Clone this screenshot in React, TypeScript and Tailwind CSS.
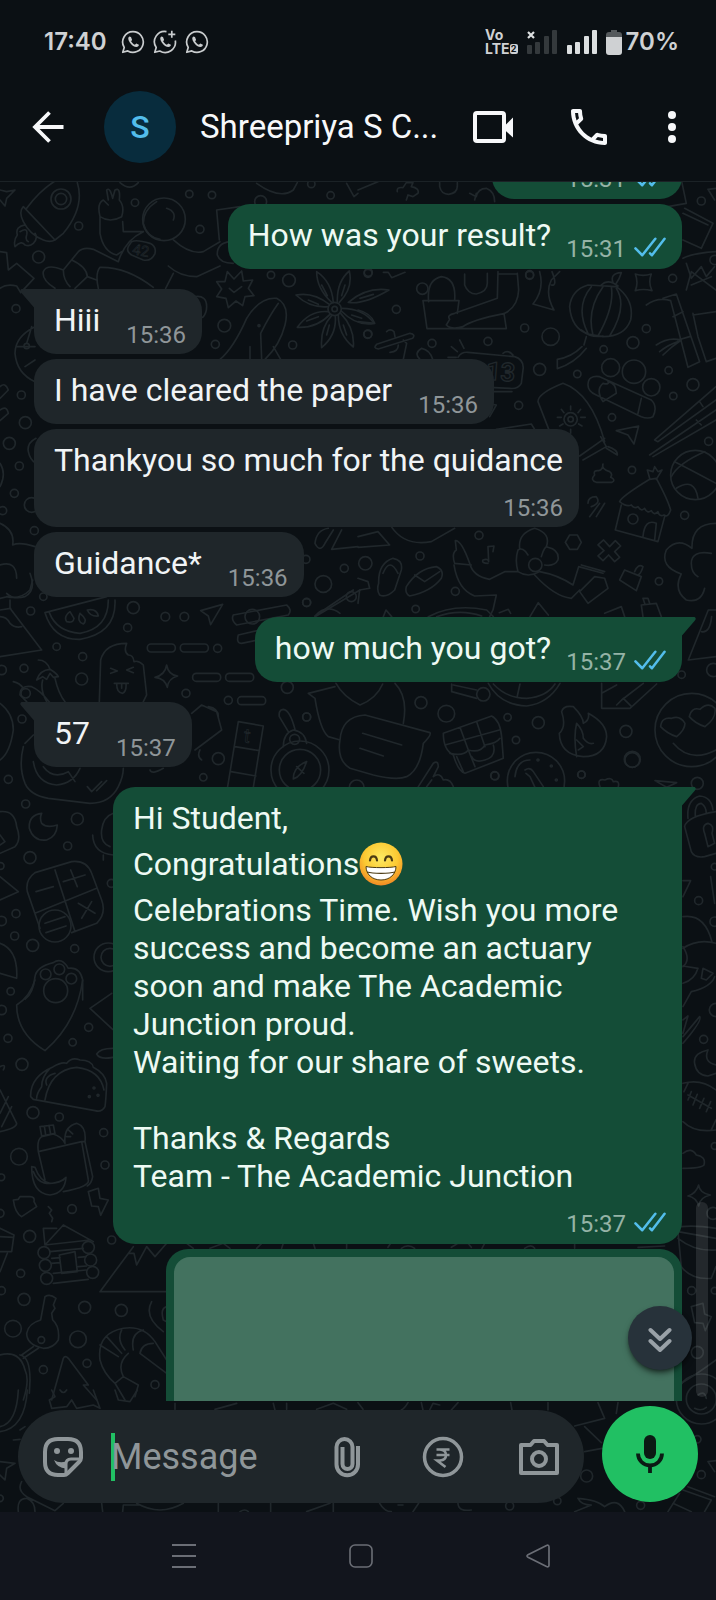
import type { ReactNode } from 'react';
import clsx from 'clsx';

type Message = {
  id: number;
  from: 'me' | 'them';
  lines: string[];
  time: string;
  tail?: boolean;
  stacked?: boolean;
};

const messages: Message[] = [
  { id: 1, from: 'me', lines: ['How was your result?'], time: '15:31' },
  { id: 2, from: 'them', lines: ['Hiii'], time: '15:36', tail: true },
  { id: 3, from: 'them', lines: ['I have cleared the paper'], time: '15:36' },
  { id: 4, from: 'them', lines: ['Thankyou so much for the quidance'], time: '15:36', stacked: true },
  { id: 5, from: 'them', lines: ['Guidance*'], time: '15:36' },
  { id: 6, from: 'me', lines: ['how much you got?'], time: '15:37', tail: true },
  { id: 7, from: 'them', lines: ['57'], time: '15:37', tail: true },
  {
    id: 8,
    from: 'me',
    lines: [
      'Hi Student,',
      'Congratulations😁',
      'Celebrations Time. Wish you more',
      'success and become an actuary',
      'soon and make The Academic',
      'Junction proud.',
      'Waiting for our share of sweets.',
      '',
      'Thanks & Regards',
      'Team - The Academic Junction',
    ],
    time: '15:37',
    tail: true,
    stacked: true,
  },
];

type Doodle = { x: number; y: number; d: string; dots: number[][]; bars?: number[][]; extra?: ReactNode };

// Wallpaper drawings, three units to a pixel
const doodles: Doodle[] = [
  {
    x: 358,
    y: 0,
    d: 'M0 570L60 545M118 575Q115 560 135 563L145 548H165L160 560Q185 565 180 580L165 590L150 585L145 600M245 548V560Q250 583 272 583Q297 580 298 560V548M335 580L355 590Q360 565 385 565Q410 575 410 605M350 600L355 580M1050 568L1074 565M1050 568L1070 600M972 548L985 610L900 625M980 625L1065 670L1030 745L975 720M975 640L1050 675M975 775Q1000 760 1074 755M985 790L1000 835L1030 800L1045 830L1070 800',
    dots: [[1030, 603, 12], [1070, 780, 14], [515, 826, 12], [30, 820, 12]],
  },
  {
    x: 0,
    y: 180,
    d: 'M80 85Q120 30 170 0M232 8Q255 80 190 160L165 180L70 80Q55 95 70 125Q90 165 130 180Q150 188 165 180M75 135Q45 140 52 165Q40 180 45 200Q65 180 75 195Q90 200 100 190Q115 175 105 160M60 155Q85 140 80 165Q75 180 85 185M0 30L20 35L45 30L20 55L15 78L0 60M300 110Q290 70 310 60L325 75M325 60L320 30Q330 20 338 55L345 30Q362 20 358 60Q375 80 365 110Q330 130 300 110L300 160Q310 215 350 225L365 215M368 125L370 155H430M500 85Q530 95 520 120M470 65Q430 90 430 130Q440 170 480 178M395 185Q410 178 450 190Q470 200 465 220Q455 245 430 240L395 225Q378 215 385 200ZM430 155Q375 180 355 245L280 208Q250 200 235 215L190 270Q140 250 130 275Q125 300 165 325M190 270Q190 300 210 320M215 240Q260 260 262 290L225 325M295 325Q285 280 300 262Q380 260 460 322M262 290L290 300M520 180Q570 225 610 215L660 185M505 258Q540 290 590 290L660 258M520 280L497 325M650 90L720 80M650 90L658 180M690 185Q650 190 652 225Q660 250 700 250M0 215L20 218L25 270L50 250L102 295L62 338L50 318Q20 310 0 325M770 10Q840 60 880 30L892 8M360 8Q390 35 415 8M1040 10L1062 50L1074 40M105 440Q45 470 45 520Q50 580 105 605M50 500H105M75 560L105 540M80 490L95 440M0 620Q15 605 25 630L0 655M0 690Q20 675 25 700L0 722M108 775Q80 790 85 815Q90 840 108 850M0 850Q20 880 0 920M0 1030Q45 1050 38 1095Q60 1085 105 1100M0 1155Q50 1140 50 1195M90 1180Q110 1230 75 1250Q40 1260 20 1240M985 1045Q950 1050 945 1090Q960 1120 975 1090L1000 1050M1025 1050L995 1108L1074 1100M585 350Q620 345 620 380Q620 400 608 412',
    dots: [[183, 57, 30], [183, 57, 17], [492, 118, 64], [568, 42, 11], [636, 45, 11], [405, 68, 11], [600, 148, 12], [236, 138, 12], [116, 231, 18], [48, 386, 12], [934, 12, 11], [992, 46, 11], [782, 65, 18], [64, 645, 12], [76, 728, 18], [28, 790, 18], [58, 858, 12], [43, 940, 12], [95, 975, 22], [8, 992, 12], [103, 1052, 12], [918, 1138, 12], [1033, 1165, 12], [970, 1212, 25], [80, 498, 8]],
    extra: <text x="398" y="226" fontSize="44" strokeWidth="2" transform="rotate(10 420 210)">42</text>,
  },
  {
    x: 190,
    y: 265,
    d: 'M80 50L105 50L112 20L132 42L155 18L160 48L188 45L175 70L192 92L165 95L158 122L138 108L115 128L108 100L80 95L95 72ZM118 70L132 82L155 65M425 112Q380 70 380 20Q425 50 430 112M442 112Q440 50 478 18Q490 70 448 112M414 125Q360 130 318 90Q370 80 418 118M414 140Q360 135 322 187Q380 190 420 148M425 152Q390 190 395 248Q440 210 436 155M445 150Q445 210 490 246Q495 190 452 145M454 138Q500 185 553 175Q520 130 456 130M475 112Q520 120 597 75Q530 65 475 112M395 60L412 92M465 60L455 92M355 105L385 118M350 168L385 155M410 210L418 180M470 210L460 180M485 150L515 160M510 100L550 88M90 283Q130 250 170 160Q210 95 260 100Q300 120 285 180Q270 240 225 283M215 283L212 205Q240 150 265 115M180 245V283M250 245L272 283M580 22L595 22L605 38L645 22M560 238L660 205Q678 208 668 220L565 252Q548 250 560 238M590 200Q600 190 612 200L615 215M640 225L650 235L640 283M600 262Q625 260 625 240M690 283Q670 265 695 250Q720 255 728 283',
    dots: [[434, 132, 20], [434, 132, 8], [243, 30, 11], [297, 46, 19], [103, 182, 19], [76, 238, 12], [308, 240, 12], [533, 208, 12], [207, 182, 3], [535, 22, 12]],
  },
  {
    x: 358,
    y: 270,
    d: 'M212 95Q205 30 250 20Q295 25 290 90M195 92H303L298 130M195 92L207 176H445L438 130M420 5L418 85L290 130Q265 135 275 148L265 165Q280 180 315 170Q340 150 440 130Q480 110 482 60L478 10M420 12H475M320 12V45Q330 72 355 72Q388 65 388 40V10M0 120Q40 130 50 160L0 155M545 5Q560 60 525 102L588 120Q560 70 580 30L605 5M582 5Q600 50 580 45M690 45Q640 60 635 110Q640 175 690 192L735 200Q800 200 818 150Q830 90 775 50ZM700 50Q650 110 690 190M735 50Q685 120 705 195M760 50Q770 110 720 198M775 55Q810 110 755 198M730 45Q750 25 780 48M765 38Q755 10 790 8Q785 25 775 40M670 180Q700 205 735 198M685 200L678 225M672 230Q640 262 598 268L598 296Q650 280 685 235M832 12Q855 20 880 12Q870 38 882 62Q855 55 832 62Q842 38 832 12M865 105Q900 80 938 92L990 292L1025 275L955 72L915 85M945 140L975 125M960 210L995 200M985 60L1000 5L1074 60M1000 45L1060 20M1005 130L1020 200L1045 275L1074 265M1005 135L1074 125M895 225Q930 200 970 210Q940 230 915 255M905 245Q930 225 960 215M300 262Q310 245 330 247L470 260Q500 270 495 300L490 340Q480 358 455 355L395 352M435 250Q450 238 465 255M400 365H462M280 230L298 245M305 210L318 235M270 262H295M690 345Q690 315 725 320L880 390Q900 410 885 440Q870 448 850 440L715 375Q690 365 690 345M850 385L840 430M735 340Q755 345 750 335Q775 340 775 370L735 395Q712 360 735 340M575 485L540 395Q540 370 615 340Q700 370 740 515M665 558L740 505M675 570L745 530L728 500M745 535L778 555Q780 540 750 530M638 408V420M610 418L618 428M668 418L660 428M598 442H610M668 442H682M605 468L615 462M672 468L662 462M638 478V490M775 482L842 468L828 522L810 495ZM890 510L1074 350M900 515L1074 390M875 555L1074 420M885 560L1074 450M890 510L900 515M1025 395L1035 410M1015 450L1030 465M950 575Q1000 600 1074 640M1040 545Q960 580 940 620M955 655Q1010 620 1020 685M735 582Q730 598 755 605Q765 612 758 622Q775 630 762 637H715Q695 630 710 615Q705 600 722 602Q735 600 735 582M785 695Q790 680 875 628L895 625Q930 690 938 720Q930 745 918 735Q905 742 900 725Q888 738 880 722Q868 732 860 715Q850 726 840 710Q830 718 820 705Q805 712 785 695M790 705L772 780L900 815L920 740M855 800Q860 745 895 760L890 810M875 625L868 600L885 605L890 590L900 605L912 600L895 628M1074 760Q1000 760 1002 835Q960 800 925 840Q905 890 970 912Q945 960 985 990Q1030 1000 1040 955M1060 850Q1000 840 1000 880Q1000 910 1020 920M290 880Q280 850 295 840L292 812Q310 810 335 880Q345 920 395 928L440 905H480M290 880L340 885M288 885Q300 960 350 978L415 975L405 1020L395 1040M480 905Q470 870 480 840Q495 830 510 855M485 835Q480 790 530 775Q580 790 565 830M550 860Q560 825 570 832Q605 840 600 870Q590 890 560 885M530 915Q590 980 640 985L665 960M480 905Q510 925 545 905Q600 915 645 945M390 880Q370 880 375 870Q390 865 392 875L390 830L408 828L405 845M645 945L662 890L735 910M670 885L740 905M740 925L750 955L690 1000L665 965L710 920ZM720 825L737 810L755 830L772 812L788 828L770 845L785 862L770 875L752 855L735 872L720 858L738 842ZM622 817L635 795H658L670 817L658 838H635ZM800 900L850 920L835 962L785 930ZM830 905Q840 880 855 890Q850 910 840 915M62 940Q60 880 105 865Q135 870 130 900L110 960Q85 985 65 975Q55 960 62 940M75 910Q95 860 120 910M145 950Q180 895 235 890Q260 900 250 925Q220 965 155 978Q140 970 145 950M170 915L200 935L245 905M0 800L60 785L95 825L0 832M100 770Q140 830 220 815L290 775M0 1000L5 960L35 955L30 935L0 925M800 1040L790 1010L740 1030M855 1040L850 1005L895 1000L910 1040M860 1000L855 985L870 985L875 1000M690 700Q690 680 715 680Q730 700 700 710M715 740L740 700M695 740L725 700M385 400L415 405L395 440M415 478L520 462L530 478',
    dots: [[193, 56, 17], [758, 293, 27], [828, 305, 35], [880, 352, 26], [638, 448, 20], [638, 448, 8], [1012, 615, 74], [825, 747, 15], [532, 885, 20], [115, 118, 12], [30, 192, 12], [515, 14, 12], [944, 25, 12], [222, 220, 12], [390, 214, 12], [500, 174, 12], [578, 200, 26], [865, 176, 12], [825, 218, 18], [737, 238, 11], [545, 298, 18], [658, 312, 11], [932, 301, 11], [1005, 344, 18], [946, 378, 11], [482, 406, 12], [762, 442, 11], [1052, 514, 12], [822, 600, 11], [980, 736, 12], [363, 796, 12], [186, 858, 12], [22, 880, 20], [292, 964, 12], [903, 934, 11], [173, 1017, 11]],
    extra: (
      <text x="384" y="332" fontSize="76" fontWeight="700" strokeWidth="4" transform="rotate(4 430 305)">
        13
      </text>
    ),
  },
  {
    x: 0,
    y: 580,
    d: 'M135 98L320 50M135 98Q160 180 240 178Q350 160 345 60M148 98Q170 155 240 160Q325 145 325 60M210 95Q190 110 200 125Q220 130 222 115ZM240 100Q230 125 250 132Q265 120 240 100M262 90Q270 110 295 108Q290 85 262 90M602 92L668 73L632 134L625 108ZM700 105L860 75Q878 90 865 105L710 135Q692 120 700 105M715 165L780 150M715 165Q708 190 725 190L775 180M945 108L1060 30M945 108Q980 70 1020 100M298 365L302 240Q315 190 380 190Q370 215 385 225Q400 225 402 245Q415 240 430 255L440 345L430 365M332 265L352 273L332 280M400 262L380 270L400 278M343 310H385M350 310Q350 340 368 340Q380 335 378 310M365 310V325M500 255Q505 285 533 288Q505 295 502 322Q495 295 465 292Q495 285 500 255M0 55L30 48M30 60V85L125 210L0 230M0 110Q20 110 30 130Q45 145 65 140M20 50Q60 60 90 30L98 0M0 90L32 85M110 300Q120 270 150 268Q170 280 175 290L160 292L150 280L140 298L128 290ZM150 268Q140 240 115 240M128 300Q120 330 140 365M165 295Q175 340 195 365M60 345Q60 315 95 320Q120 330 150 368M60 345L80 365M40 305Q60 310 70 325M715 425L790 438L760 622M715 425L683 620M705 500L778 512M693 575L768 588M850 500Q850 460 880 450Q915 455 920 490M865 455L838 410Q835 390 850 388Q870 390 885 448M920 545Q905 590 880 597Q880 560 920 545M890 560L912 580M0 370Q40 400 40 450Q30 520 0 540M70 500Q55 560 75 610Q90 645 145 655L270 670Q330 670 355 620Q370 590 370 565M75 490L100 465M100 545Q110 610 170 615Q220 610 240 565M130 560Q160 600 205 575L225 605M262 620L275 635L305 605M290 632L320 602M575 400L605 375L650 395L665 450L585 510M625 380Q655 385 655 410M600 510Q590 530 605 540M450 570Q455 585 490 565M125 700Q85 705 88 745Q100 785 140 780Q170 770 172 735Q140 745 125 730Q118 715 125 700M0 695Q45 690 50 740Q65 780 45 800L0 820M0 765L15 785L0 795M340 700Q310 710 305 750Q300 790 330 800M278 765Q280 820 340 825M310 825V840M105 878L215 845Q260 840 275 880L305 960Q320 1000 290 1030L215 1058M105 878Q75 900 82 935L120 1045M165 870L225 1055M105 1000L290 925M108 935L160 920M190 905L255 885M212 870L232 920M235 970L285 1000M275 965L245 1015M135 1030L195 1010M138 1058L198 1038M0 890L55 935L0 960M0 1090Q55 1110 50 1195L0 1180M75 1258Q100 1240 105 1190Q110 1160 160 1148Q185 1130 205 1165Q240 1160 248 1200L248 1260',
    dots: [[757, 110, 22], [1054, 50, 15], [77, 340, 14], [900, 570, 87], [900, 570, 62], [884, 478, 15], [165, 1038, 48], [325, 1132, 43], [330, 1132, 27], [137, 1183, 16], [178, 1168, 16], [214, 1196, 16], [167, 1232, 36], [92, 93, 12], [400, 83, 18], [496, 110, 13], [553, 110, 13], [383, 143, 12], [920, 67, 12], [170, 200, 11], [248, 230, 12], [245, 297, 18], [558, 340, 12], [72, 265, 12], [5, 270, 14], [66, 417, 12], [862, 322, 18], [130, 50, 11], [920, 411, 12], [655, 536, 18], [610, 592, 11], [25, 598, 12], [77, 672, 12], [232, 717, 18], [203, 798, 12], [90, 833, 18], [2, 858, 10], [334, 910, 12], [48, 1001, 12], [5, 1023, 14], [44, 1068, 12], [98, 1096, 18], [224, 1106, 12], [32, 1234, 11], [653, 205, 12], [685, 361, 12]],
    bars: [[442, 192], [541, 192], [578, 280], [677, 280], [713, 350]],
    extra: <text x="732" y="488" fontSize="60" strokeWidth="2" transform="rotate(8 745 465)">t</text>,
  },
  {
    x: 300,
    y: 590,
    d: 'M25 310L105 290M25 310L45 325Q60 420 85 440L120 450M108 280Q130 320 180 345Q230 325 248 282M285 280Q325 320 310 400M120 450Q125 380 195 375L390 428Q395 435 370 460Q360 540 320 560Q290 572 220 555L150 535Q110 510 120 450M188 430L305 465M180 475L250 498M430 430L575 378Q600 390 605 440L610 505L495 550Q475 545 460 495Q430 480 430 430M480 412L505 480L525 530M530 395L555 470M435 465L598 420M450 490Q490 500 505 480Q540 490 555 465Q590 460 600 445M515 500Q525 520 555 510Q590 500 580 465M470 500L490 545M785 365Q790 345 820 350Q850 380 850 400Q870 390 865 370Q920 400 920 440Q915 500 850 500Q780 495 778 430Q800 410 785 365M830 500Q820 440 830 400Q850 420 850 445Q865 465 880 460M830 450L850 470L835 480M1130 440Q1100 430 1082 410Q1085 380 1115 385Q1140 375 1155 400Q1155 420 1130 440M1215 410Q1185 400 1168 380Q1175 350 1200 358Q1225 335 1245 355Q1250 385 1215 410M1120 460Q1170 520 1248 480M905 280V355H990M905 310L950 285M990 355L1070 282M965 330L1030 280M950 345L970 325L995 350M565 280Q600 345 680 348Q745 340 780 280M580 282Q620 325 680 325Q740 320 765 282M660 282L652 318M455 282V305L530 325M530 300L460 285M645 560Q650 510 690 510M675 540Q690 530 700 545L730 590M678 550L690 560L705 592M355 590L400 520Q415 510 415 530L400 560M400 560Q420 545 430 570M430 570Q450 565 460 590M395 570L380 590M1165 210L1225 60M1165 210L1248 200M1205 125Q1230 130 1235 80M1225 60H1248M1065 572L1130 578L1100 592ZM385 80Q460 40 560 60L580 80M410 80Q480 55 545 78M690 80L715 38L745 75M598 68L625 58L632 70M250 80L258 60L275 80M45 80L180 0M900 590Q890 565 915 570Q935 560 940 575Q960 570 955 590',
    dots: [[1175, 420, 110], [550, 313, 20], [708, 573, 86], [20, 381, 12], [363, 338, 18], [439, 371, 25], [623, 382, 11], [715, 398, 18], [648, 450, 11], [978, 424, 18], [997, 508, 24], [585, 558, 12], [845, 554, 11], [1192, 580, 18], [1145, 254, 11], [1240, 240, 20], [170, 592, 22], [714, 510, 3], [754, 528, 3], [769, 570, 3], [20, 38, 12]],
  },
  {
    x: 358,
    y: 760,
    d: 'M980 200Q985 170 1074 155M980 200L1000 275Q1010 295 1040 290L1074 280M990 175Q985 120 1025 108Q1060 110 1065 150M1012 168Q1010 130 1030 130Q1045 140 1045 160M1040 220Q1030 195 1050 190Q1070 195 1062 220L1070 250L1050 260ZM975 362L998 362L975 410M1058 350L1070 430M975 470Q1040 460 1062 545M975 565Q1020 535 1074 550M975 560Q1000 600 975 620M975 670Q1010 660 1020 625L975 618M1035 625L1030 655L1045 660L1065 640ZM975 740L1000 695Q1060 680 1070 650M975 780L990 768L975 820M975 830L1025 770Q1035 780 975 850M1050 870Q1005 880 1010 910Q1015 945 1050 948L1074 940M1050 870Q1035 905 1074 915M975 970Q1030 955 1074 990M975 1085Q1010 1120 1074 1110M990 970L978 995M1060 1110L1074 1080M990 1005L1060 1045M1000 995L990 1020M1018 1003L1005 1035M1038 1015L1025 1045M1058 1025L1045 1055M975 1180Q1000 1160 1015 1185Q1045 1190 1038 1215Q1030 1225 975 1225',
    dots: [[1022, 422, 12], [1070, 485, 14], [1037, 838, 12], [1074, 750, 20], [1070, 1158, 10], [410, 47, 12], [670, 44, 11], [823, 0, 22], [1070, 320, 10]],
  },
  {
    x: 0,
    y: 980,
    d: 'M105 0Q90 50 50 75Q50 160 135 212Q230 130 248 0M335 40L270 85L338 148M338 205Q300 205 290 222Q300 240 338 232M92 350Q90 290 160 260Q185 245 200 250Q215 230 240 240Q275 240 280 262Q315 280 320 310Q318 360 315 380Q305 398 285 392L100 358ZM135 360Q150 270 230 262Q300 270 312 330M150 265Q125 290 125 320Q110 340 110 355M165 280Q130 290 140 315M115 515L245 485L265 600Q270 620 190 635M245 485L255 485L278 590Q275 610 262 618M115 515L135 600M115 515Q110 480 125 470L160 462Q185 470 195 490M120 440L160 435L165 460L125 468ZM133 438L137 465M147 436L152 462M195 490Q190 440 230 430Q260 440 255 485M205 450L218 462M200 470L212 470M95 560Q95 640 150 645Q195 640 198 592Q180 610 150 610Q120 605 105 562ZM100 575Q120 630 190 600M40 660L55 658L60 650H90Q105 650 102 665L110 680L65 710Q45 700 40 660M265 635L295 625L300 655L325 660L302 706L295 680L275 678ZM145 680L155 690L148 700L158 715L155 725M135 795L190 735L280 785M130 745L170 745M130 745L135 795L270 780M150 815L250 805M155 850L180 848M235 832L258 830M235 860L260 858M155 835L180 833M160 910L265 898M160 880L258 870M178 825L225 815L232 875L185 880ZM500 935H300L400 800M385 820L402 820L410 855L440 800L465 830L500 790M0 330L50 430Q50 445 0 455M25 350L0 400M35 380L5 440M0 745L42 765L35 815L0 815M0 770L40 772M22 820L0 875M0 260Q20 250 10 270M135 950Q150 940 168 955L160 975L165 985L155 1000L158 1020Q180 1040 175 1080Q160 1105 130 1105Q80 1095 80 1060Q85 1030 122 1020L135 950M100 1100L65 1125M115 1105L70 1135M455 965Q430 1010 490 1055M500 980Q480 985 490 1020L500 1025M300 1140Q290 1060 370 1045Q430 1035 465 1085L500 1140M300 1140Q310 1180 345 1210L370 1190Q350 1150 385 1120M420 1120Q425 1090 460 1090M420 1120L500 1180M300 1095L355 1130M320 1070L365 1120M365 1050Q350 1080 375 1110M430 1050Q390 1060 400 1110M370 1190L415 1215L405 1250M345 1210L375 1260M155 1260L190 1135Q195 1125 205 1135L265 1215L250 1215L290 1260M180 1230Q190 1245 200 1230M0 1125Q60 1110 75 1170Q90 1200 70 1260M60 1125Q90 1130 90 1200L88 1240M560 790L580 805M630 805L670 790L690 805M770 805L785 790M850 790L845 805M940 790L945 805M1040 790V805',
    dots: [[282, 324, 3], [294, 346, 3], [268, 350, 3], [132, 818, 18], [136, 856, 18], [140, 895, 18], [265, 802, 18], [272, 840, 18], [278, 877, 18], [124, 1080, 10], [5, 90, 14], [24, 175, 12], [266, 142, 12], [218, 187, 11], [66, 253, 18], [99, 398, 18], [178, 411, 12], [311, 458, 12], [57, 530, 25], [315, 555, 12], [4, 592, 10], [216, 687, 13], [0, 700, 12], [89, 769, 18], [335, 780, 12], [62, 880, 12], [4, 932, 12], [72, 958, 18], [254, 982, 18], [364, 991, 18], [39, 1046, 25], [234, 1078, 25], [261, 1150, 12], [130, 1169, 12], [465, 1214, 12]],
  },
  {
    x: 358,
    y: 1160,
    d: 'M1022 75Q1025 100 1057 105Q1025 112 1022 138Q1015 112 990 108Q1015 100 1022 75M960 215L970 320Q1000 360 1060 355L1074 320M960 235Q1010 275 1074 270M970 200Q1010 195 1074 205M960 215L1074 235M1000 440L1035 430L1040 462L1060 470L1042 512L1035 490L1010 488ZM970 670Q1020 640 1074 600M90 262L98 250M130 265Q150 250 170 265M280 262L300 250H330L340 262M380 250L372 265M500 265Q520 250 530 265M650 250V265M840 262L920 258M1020 705Q1040 690 1045 715M1010 745Q1030 755 1045 742',
    dots: [[1065, 160, 18], [1001, 392, 12], [1070, 392, 10], [1018, 577, 18], [1030, 717, 45], [1030, 717, 75]],
  },
  {
    x: 0,
    y: 1390,
    d: 'M0 110Q50 100 55 0M0 125Q75 115 82 0M155 0L165 20L148 30L155 55L200 50L215 30L230 55L280 45L300 55L280 0M345 0L355 30L390 35L412 0M0 215L45 220L20 235L15 270L0 255M60 120L75 110M40 150L60 148M65 275Q50 300 80 320L165 362L190 340M55 365Q50 325 80 325Q105 335 105 365M305 340L308 365M368 365L370 345H420M410 340Q480 380 550 340M655 340V365M720 365Q735 355 745 365M812 340V365M920 365L990 340M1000 340V365M525 40V58M645 58L710 40M820 40L825 60M860 58V40M950 58L1000 40L1040 58',
    dots: [[0, 325, 10]],
  },
  {
    x: 358,
    y: 1390,
    d: 'M0 38L15 58M150 38Q140 55 130 60M190 38L195 60M215 60L225 40L245 45M300 38L280 60M458 38L462 60M570 38V60M650 108L740 85L720 38M680 110L730 158M680 185L732 175M775 70L780 38M1050 215L1074 212M1050 215L1070 245M990 290L1070 320M965 310L930 365M975 300L1060 330L1040 365M945 340L1000 365M660 325Q720 330 740 350Q780 320 800 365M660 325Q670 345 700 345L650 365M300 340Q300 365 340 360M65 340Q80 365 100 365M120 345L135 345M165 365L182 340',
    dots: [[686, 258, 18], [1030, 254, 12], [598, 333, 11], [455, 348, 12], [848, 346, 12], [1018, 148, 11]],
  },
];

function Wallpaper() {
  return (
    <svg
      className="absolute inset-0 h-full w-full"
      viewBox="0 182 716 1330"
      preserveAspectRatio="xMidYMin slice"
      fill="none"
      stroke="#20272b"
      strokeWidth="5"
      strokeLinecap="round"
      strokeLinejoin="round"
      fontFamily="Roboto, sans-serif"
      aria-hidden="true"
    >
      {doodles.map((doodle) => (
        <g key={`${doodle.x}-${doodle.y}`} transform={`translate(${doodle.x} ${doodle.y}) scale(0.3333)`}>
          <path d={doodle.d} />
          {doodle.dots.map(([cx, cy, r]) => (
            <circle key={`${cx}-${cy}-${r}`} cx={cx} cy={cy} r={r} />
          ))}
          {doodle.bars?.map(([x, y]) => (
            <rect key={`${x}-${y}`} x={x} y={y} width="84" height="24" rx="11" />
          ))}
          {doodle.extra}
        </g>
      ))}
    </svg>
  );
}

function ChatGlyph({ plus }: { plus?: boolean }) {
  return (
    <svg className="size-6" viewBox="0 0 24 24" fill="none" stroke="#c9ccce" strokeWidth="1.7" strokeLinejoin="round">
      {plus ? (
        <path d="M13.5 1.6A10.3 10.3 0 0 0 3.2 17.5L1.8 22.3l5-1.3A10.3 10.3 0 0 0 22.3 10.5M18.8 0.8v7M15.3 4.3h7" />
      ) : (
        <path d="M12 1.7A10.3 10.3 0 0 0 3.2 17.4L1.8 22.3l5-1.4A10.3 10.3 0 1 0 12 1.7z" />
      )}
      <path
        d="M8.3 6.6c-1.6 1-1.3 3.2.5 5.9 2 3 4.6 4.6 6.6 4.6 1.5 0 2.6-1.2 2.5-2.3l-2.6-1.4-1.4 1.4c-1.6-.6-3-2-3.8-3.5l1-1.4-1.1-2.9z"
        fill="#c9ccce"
        stroke="none"
      />
    </svg>
  );
}

function Signal({ off }: { off?: boolean }) {
  return (
    <svg className="h-6 w-8" viewBox="0 0 32 24" fill={off ? '#34393c' : '#dcdfe0'}>
      <rect x="1" y="15" width="5" height="9" rx="1" />
      <rect x="9" y="12" width="5" height="12" rx="1" />
      <rect x="18" y="6" width="5" height="18" rx="1" />
      <rect x="26" y="0" width="5" height="24" rx="1" />
      {off && <path d="M2 2l6 6M8 2L2 8" stroke="#dcdfe0" strokeWidth="2.2" />}
    </svg>
  );
}

function StatusBar() {
  return (
    <div className="flex h-20 shrink-0 items-center justify-between pt-1 pr-[37px] pl-11 text-[#cfd1d3]">
      <div className="flex items-center gap-2">
        <span className="mr-[6px] font-[Inter,sans-serif] text-[24px] leading-6 font-semibold">17:40</span>
        <ChatGlyph />
        <ChatGlyph plus />
        <ChatGlyph />
      </div>
      <div className="flex items-center">
        <div className="mr-2 font-[Inter,sans-serif] text-[14px] leading-[14px] font-bold">
          <div>Vo</div>
          <div className="flex items-center">
            LTE
            <span className="flex h-[10px] w-2 items-center justify-center rounded-xs bg-[#cfd1d3] text-[9px] leading-[10px] text-[#0b1014]">
              2
            </span>
          </div>
        </div>
        <Signal off />
        <span className="w-2" />
        <Signal />
        <svg className="mr-1 ml-2 h-[25px] w-4" viewBox="0 0 16 25">
          <path d="M5 0h6v2h2a3 3 0 0 1 3 3v3H0V5a3 3 0 0 1 3-3h2z" fill="#55595c" />
          <path d="M0 7h16v15a3 3 0 0 1-3 3H3a3 3 0 0 1-3-3z" fill="#cfd1d3" />
        </svg>
        <span className="font-[Inter,sans-serif] text-[24px] leading-6 font-semibold">70%</span>
      </div>
    </div>
  );
}

function ChatHeader() {
  return (
    <header className="flex h-[102px] shrink-0 items-center border-b border-[#1b2226] pr-6 pb-[7px] pl-8">
      <button aria-label="Back">
        <svg className="size-8" viewBox="0 0 32 32" fill="none" stroke="#f7f8fa" strokeWidth="3.8">
          <path d="M31.5 16H3M17.5 1.5L3 16l14.5 14.5" />
        </svg>
      </button>
      <div className="ml-10 flex size-[72px] shrink-0 items-center justify-center rounded-full bg-[#082c3d] text-[32px] font-medium text-[#53bdeb]">
        S
      </div>
      <h1 className="ml-6 flex-1 text-[33px] leading-10 whitespace-nowrap text-[#f7f8fa]">Shreepriya S C...</h1>
      <button aria-label="Video call">
        <svg className="size-10" viewBox="0 0 40 40" fill="none" stroke="#f7f8fa" strokeWidth="4">
          <rect x="2" y="6" width="29" height="28" rx="2" />
          <path d="M30 20.5l10-10v20l-10-9z" fill="#f7f8fa" stroke="none" />
        </svg>
      </button>
      <button aria-label="Voice call" className="ml-14">
        <svg className="size-10" viewBox="2 2 20 20" fill="#f7f8fa">
          <path d="M6.54 5c.06.89.21 1.76.45 2.59l-1.2 1.2c-.41-1.2-.67-2.47-.76-3.79h1.51m9.86 12.02c.85.24 1.72.39 2.6.45v1.49c-1.32-.09-2.59-.35-3.8-.75l1.2-1.19M7.5 3H4c-.55 0-1 .45-1 1 0 9.39 7.61 17 17 17 .55 0 1-.45 1-1v-3.49c0-.55-.45-1-1-1-1.24 0-2.45-.2-3.57-.57-.1-.04-.21-.05-.31-.05-.26 0-.51.1-.71.29l-2.2 2.2c-2.83-1.45-5.15-3.76-6.59-6.59l2.2-2.2c.28-.28.36-.67.25-1.02C8.7 6.45 8.5 5.25 8.5 4c0-.55-.45-1-1-1z" />
        </svg>
      </button>
      <button aria-label="More options" className="ml-[43px]">
        <svg className="size-10" viewBox="0 0 40 40" fill="#f7f8fa">
          <circle cx="20" cy="8" r="4" />
          <circle cx="20" cy="20" r="4" />
          <circle cx="20" cy="32" r="4" />
        </svg>
      </button>
    </header>
  );
}

function Grin() {
  return (
    <svg className="size-11" viewBox="0 0 44 44" role="img" aria-label="😁">
      <defs>
        <radialGradient id="face" cx="50%" cy="35%" r="65%">
          <stop offset="0%" stopColor="#fdea62" />
          <stop offset="60%" stopColor="#fcc932" />
          <stop offset="100%" stopColor="#f18a24" />
        </radialGradient>
      </defs>
      <circle cx="22" cy="22" r="21.5" fill="url(#face)" />
      <path d="M11 18.5c.5-5.5 6.500-5.500 7 0M26 18.500c.5-5.500 6.500-5.500 7 0" fill="none" stroke="#4b3a12" strokeWidth="2.2" strokeLinecap="round" />
      <path d="M7 24.5c5 1.500 25 1.500 30 0C37 32 31 38 22 38S7 32 7 24.500z" fill="#fff" stroke="#4b3a12" strokeWidth="1" strokeLinejoin="round" />
      <path d="M8 30c6 1.800 22 1.800 28 0" fill="none" stroke="#4b3a12" strokeWidth="1.2" />
    </svg>
  );
}

function Tail({ mine }: { mine: boolean }) {
  return mine ? (
    <svg className="absolute top-0 -right-[14px] h-[21px] w-4" viewBox="0 0 16 21" fill="#144d37">
      <path d="M0 0h14.5q2.5 1.5 0 4L2 18.5V21H0z" />
    </svg>
  ) : (
    <svg className="absolute top-0 -left-[14px] h-[21px] w-4" viewBox="0 0 16 21" fill="#1f262a">
      <path d="M16 0H1.5q-2.5 1.5 0 4L14 18.5V21h2z" />
    </svg>
  );
}

function Meta({ time, mine }: { time: string; mine: boolean }) {
  return (
    <div
      className={clsx(
        'flex shrink-0 items-center self-end text-[24px] leading-7',
        mine ? 'mb-px gap-2 text-[#95b3a6]' : 'text-[#8f9699]'
      )}
    >
      {time}
      {mine && (
        <svg
          className="mb-1 h-5 w-8"
          viewBox="0 0 33 20"
          fill="none"
          stroke="#53bdeb"
          strokeWidth="2.6"
          strokeLinecap="round"
          strokeLinejoin="round"
        >
          <path d="M1.5 11.5l7 7L22 1.5M16.5 16.5l2 2L31.5 1.5" />
        </svg>
      )}
    </div>
  );
}

function Line({ text }: { text: string }) {
  const [before, after] = text.split('😁');
  if (after === undefined) return <p className="min-h-[38px]">{text}</p>;
  return (
    <p className="flex h-[54px] items-center">
      {before}
      <Grin />
      {after}
    </p>
  );
}

function Bubble({ message }: { message: Message }) {
  const mine = message.from === 'me';
  return (
    <div
      className={clsx(
        'relative flex max-w-full rounded-[22px] pt-3 pr-4 pb-[5px] pl-5 text-[32px] leading-[38px]',
        mine ? 'self-end bg-[#144d37] text-[#eefaf4]' : 'self-start bg-[#1f262a] text-[#f1f4f6]',
        message.stacked ? 'flex-col gap-[15px]' : mine ? 'gap-[15px]' : 'gap-[26px]',
        message.tail ? 'mt-5' : 'mt-[5px]',
        message.tail && (mine ? 'rounded-tr-none' : 'rounded-tl-none'),
        message.lines.length > 1 && 'w-[569px]'
      )}
    >
      {message.tail && <Tail mine={mine} />}
      <div className={clsx(!message.stacked && 'pb-[10px]')}>
        {message.lines.map((line, i) => (
          <Line key={i} text={line} />
        ))}
      </div>
      <Meta time={message.time} mine={mine} />
    </div>
  );
}

function Composer() {
  return (
    <form className="relative flex shrink-0 items-start gap-[18px] px-[18px] pt-[5px] pb-[9px]">
      <div className="mt-1 flex h-[93px] min-w-0 flex-1 items-center rounded-full bg-[#1f262a] px-6">
        <button type="button" aria-label="Stickers">
          <svg className="size-[42px]" viewBox="0 0 42 42" fill="none" stroke="#8f9699" strokeWidth="4" strokeLinejoin="round">
            <path d="M16 3h10q13 0 13 13v6q0 2-2 4L26 37q-2 2-4 2h-6Q3 39 3 26V16Q3 3 16 3z" />
            <path d="M38 23h-9q-5 0-5 5v10" strokeWidth="3" />
            <path d="M12 24q5 3.5 12 1.5v7q-9-.5-12-8.500z" fill="#8f9699" stroke="none" />
            <circle cx="15" cy="15" r="3" fill="#8f9699" stroke="none" />
            <circle cx="29" cy="15" r="3" fill="#8f9699" stroke="none" />
          </svg>
        </button>
        <span className="-mr-1 ml-[27px] h-12 w-1 shrink-0 bg-[#21c063]" />
        <input
          type="text"
          aria-label="Message"
          placeholder="Message"
          className="h-12 min-w-0 flex-1 bg-transparent text-[36px] text-[#f1f4f6] outline-none placeholder:text-[#8f9699]"
        />
        <div className="flex shrink-0 items-center gap-[54px]">
          <button type="button" aria-label="Attach">
            <svg className="size-[42px]" viewBox="0 0 42 42" fill="none" stroke="#8f9699" strokeWidth="4" strokeLinecap="butt">
              <path d="M32 10v18.500a10.500 10.500 0 0 1-21.500 0V11a8 8 0 0 1 16 0v17a5 5 0 0 1-10 0V11" />
            </svg>
          </button>
          <button type="button" aria-label="Payment">
            <svg className="size-[42px]" viewBox="0 0 42 42" fill="none" stroke="#8f9699" strokeWidth="3.5">
              <circle cx="21" cy="21" r="18.5" />
              <path d="M14.5 13.5h13M14.500 19h13M15 13.500h3q6 .5 6 5.500t-6 5.500h-3L23.500 31" strokeWidth="2.6" />
            </svg>
          </button>
          <button type="button" aria-label="Camera">
            <svg className="size-[42px]" viewBox="0 0 42 42" fill="none" stroke="#8f9699" strokeWidth="4" strokeLinejoin="round">
              <path d="M3 9h9.500l3.500-4h10l3.500 4H39v28H3z" />
              <circle cx="21" cy="23" r="7" />
            </svg>
          </button>
        </div>
      </div>
      <button
        type="button"
        aria-label="Record voice message"
        className="flex size-24 shrink-0 items-center justify-center rounded-full bg-[#21c063]"
      >
        <svg className="h-[38px] w-7" viewBox="0 0 28 38" fill="none" stroke="#0b1a14" strokeWidth="3.8">
          <rect x="8" y="0" width="12" height="24" rx="6" fill="#0b1a14" stroke="none" />
          <path d="M2 18.5a12 12 0 0 0 24 0M14 30v8" />
        </svg>
      </button>
    </form>
  );
}

function NavBar() {
  return (
    <nav className="flex h-[88px] shrink-0 items-center justify-center gap-[153px] bg-[#12151d] pl-[6px]">
      <button aria-label="Recent apps">
        <svg className="size-6" viewBox="0 0 24 24" stroke="#6b6e76" strokeWidth="1.8">
          <path d="M0 1h24M0 12h24M0 23h24" />
        </svg>
      </button>
      <button aria-label="Home">
        <svg className="size-6" viewBox="0 0 24 24" fill="none" stroke="#6b6e76" strokeWidth="1.6">
          <rect x="1" y="1" width="22" height="22" rx="5" />
        </svg>
      </button>
      <button aria-label="Back to previous app">
        <svg className="size-6" viewBox="0 0 24 24" fill="none" stroke="#6b6e76" strokeWidth="1.7">
          <path d="M20.5 1.5q2.5-1 2.5 1.5v18q0 2.500-2.500 1.500L2 13.200q-2-1.200 0-2.400z" />
        </svg>
      </button>
    </nav>
  );
}

export default function App() {
  return (
    <div className="flex h-screen flex-col bg-[#0b1014] font-[Roboto,'Liberation_Sans',sans-serif]">
      <StatusBar />
      <ChatHeader />
      <main className="relative flex min-h-0 flex-1 flex-col overflow-hidden">
        <Wallpaper />
        <section className="relative min-h-0 flex-1 overflow-hidden">
          <div className="-mt-12 flex flex-col px-[34px]">
            {/* Earlier message, scrolled under the header */}
            <div className="flex h-[65px] w-[190px] items-end justify-end self-end rounded-[22px] bg-[#144d37] pr-4 pb-[5px]">
              <Meta time="15:31" mine />
            </div>
            {messages.map((message) => (
              <Bubble key={message.id} message={message} />
            ))}
            {/* Photo still loading */}
            <div className="mt-[5px] h-[300px] w-[516px] max-w-full self-end rounded-[22px] bg-[#144d37] p-2">
              <div className="h-full rounded-[16px] bg-[#43725f]" />
            </div>
          </div>
          <div className="absolute right-2 bottom-1 h-[195px] w-3 rounded-full bg-white/10" />
          <button
            aria-label="Scroll to latest"
            className="absolute right-6 bottom-[31px] flex size-16 items-center justify-center rounded-full bg-[#27323a] pt-1 shadow-md shadow-black/50"
          >
            <svg className="h-[26px] w-6" viewBox="0 0 24 26" fill="none" stroke="#99a1a7" strokeWidth="4" strokeLinecap="round" strokeLinejoin="round">
              <path d="M2.5 3L12 12l9.500-9M2.500 14L12 23l9.500-9" />
            </svg>
          </button>
        </section>
        <Composer />
      </main>
      <NavBar />
    </div>
  );
}
